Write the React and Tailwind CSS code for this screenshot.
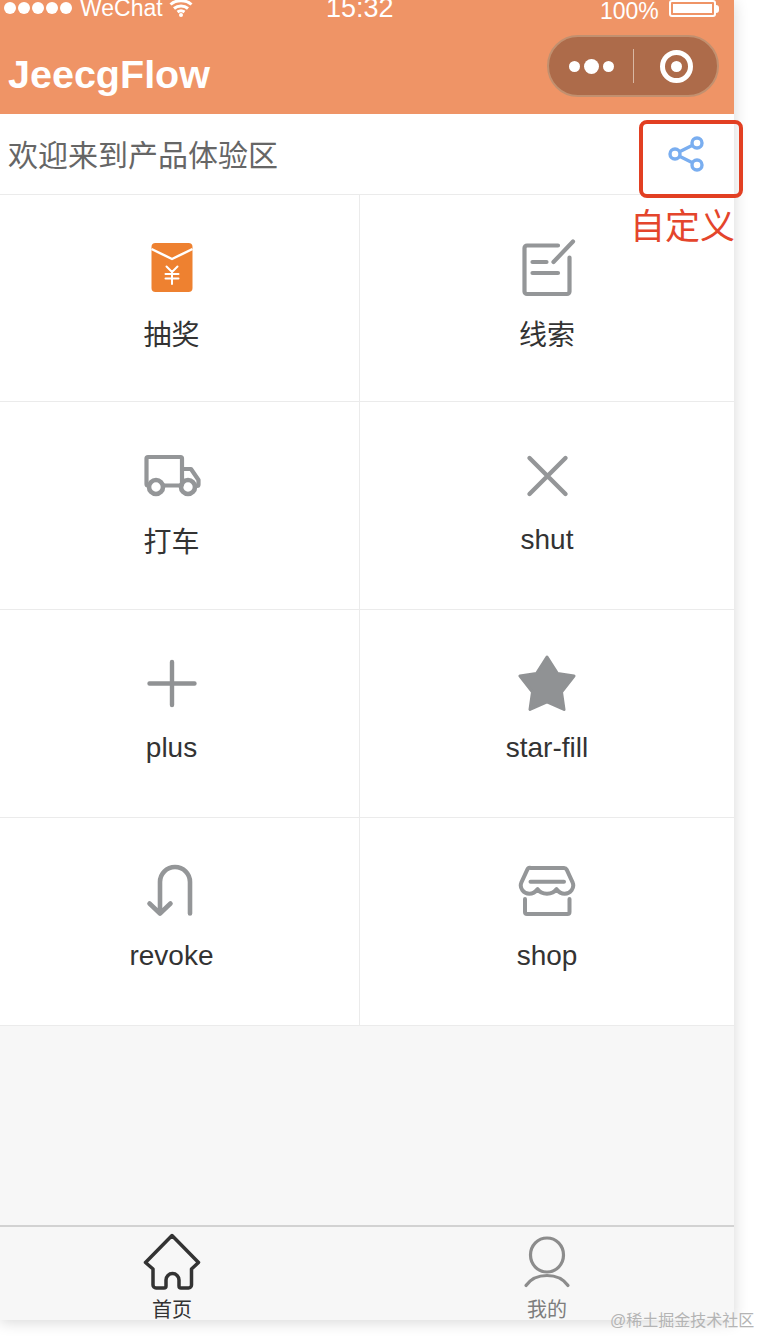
import React from "react";

const FONT = "[font-family:'Liberation_Sans','Noto_Sans_CJK_SC',sans-serif]";

const Svg = ({ children, size = 58, className = "" }) => (
  <svg
    width={size}
    height={size}
    viewBox={`0 0 ${size} ${size}`}
    fill="none"
    strokeLinecap="round"
    strokeLinejoin="round"
    className={className}
  >
    {children}
  </svg>
);

const RedPacket = () => (
  <Svg>
    <rect x="8.500" y="4" width="41" height="49" rx="4" fill="#ee8130" />
    <g stroke="#fff" strokeWidth="2.500">
      <path d="M8.500 10L29 20L49.500 10" strokeLinecap="butt" />
      <path d="M23.500 27.500L29 33L34.500 27.500M22.500 35H35.500M22.500 39.500H35.500M29 33V45" strokeWidth="2" />
    </g>
  </Svg>
);

const Note = () => (
  <Svg>
    <g stroke="#949698" strokeWidth="4.200">
      <path d="M40 6.500H9a2.500 2.500 0 0 0-2.500 2.500V52.500a2.500 2.500 0 0 0 2.500 2.500H49a2.500 2.500 0 0 0 2.500-2.500V18.500" />
      <path d="M35.500 23L55 2.500M14.500 23H28.500M14.500 34H40" />
    </g>
  </Svg>
);

const Truck = () => (
  <Svg>
    <g stroke="#949698" strokeWidth="4.200">
      <path d="M5 39.500a1.500 1.500 0 0 1-1.500-1.500V12.500A1.500 1.500 0 0 1 5 11h32.500A1.500 1.500 0 0 1 39 12.500V39" />
      <path d="M21 39.500H37" />
      <path d="M39 23h9l7.500 11v4.500A1.500 1.500 0 0 1 54 40h-1.500" />
      <circle cx="13" cy="41" r="7" strokeWidth="4.600" />
      <circle cx="45" cy="41" r="7" strokeWidth="4.600" />
    </g>
  </Svg>
);

const Shut = () => (
  <Svg>
    <path d="M11.500 12L47.500 48M47.500 12L11.500 48" stroke="#949698" strokeWidth="4.400" />
  </Svg>
);

const Plus = () => (
  <Svg>
    <path d="M6.500 29.500H51.500M29 8V51" stroke="#909294" strokeWidth="4.400" />
  </Svg>
);

const Star = () => (
  <Svg>
    <path
      d="M29 3L39.500 19.500L56 22L43.500 38L46 55.500L29 48L12 55.500L14.500 38L2 22L18.500 19.500Z"
      fill="#909294"
      stroke="#909294"
      strokeWidth="3"
    />
  </Svg>
);

const Revoke = () => (
  <Svg>
    <path
      d="M47 51.500V20A15 15 0 0 0 17 20V51M6.500 41.500L17 51.500L27.500 41.500"
      stroke="#949698"
      strokeWidth="4.600"
    />
  </Svg>
);

const Shop = () => (
  <Svg>
    <g stroke="#949698" strokeWidth="4">
      <path d="M13 6h33a3 3 0 0 1 2.700 1.700l6 13c2 5-2 11-8 11-3.500 0-6-1.500-8.200-4.500-2 3-5 4.500-9.500 4.500s-7.500-1.500-9.500-4.500c-2.200 3-4.700 4.500-8.200 4.500-6 0-10-6-8-11l6-13A3 3 0 0 1 13 6z" />
      <path d="M12.500 19.700H46" />
      <path d="M7 37V50a2 2 0 0 0 2 2H49.500a2 2 0 0 0 2-2V37" />
    </g>
  </Svg>
);

const Home = () => (
  <Svg>
    <path
      d="M29 2.500L55.500 29.500L48.500 36V52a3 3 0 0 1-3 3H38a2 2 0 0 1-2-2V47a6.500 6.500 0 0 0-13 0v6a2 2 0 0 1-2 2H13a3 3 0 0 1-3-3V36L2.500 29.500Z"
      stroke="#333"
      strokeWidth="3.500"
    />
  </Svg>
);

const Person = () => (
  <Svg>
    <ellipse cx="29" cy="22" rx="16.500" ry="17" stroke="#8c8c8c" strokeWidth="3.200" />
    <path d="M8 52.500C13 45.500 20 42.500 29 42.500S45 45.500 50 52.500" stroke="#8c8c8c" strokeWidth="3.200" />
  </Svg>
);

const cells = [
  { label: "抽奖", icon: RedPacket, cjk: true },
  { label: "线索", icon: Note, cjk: true },
  { label: "打车", icon: Truck, cjk: true },
  { label: "shut", icon: Shut },
  { label: "plus", icon: Plus },
  { label: "star-fill", icon: Star },
  { label: "revoke", icon: Revoke },
  { label: "shop", icon: Shop },
];

const App = () => {
  return (
    <div className={`relative w-[758px] h-[1336px] overflow-hidden bg-white ${FONT}`}>
      <div className="relative w-[734px] h-[1320px] flex flex-col bg-white shadow-[0_2px_14px_rgba(0,0,0,0.16)]">
        {/* status bar + title */}
        <header className="h-[114px] bg-[#ef9466] text-white">
          <div className="h-[35px] flex items-start overflow-hidden">
            <div className="w-[326px] flex items-center pl-1 h-[15px]">
              <div className="flex gap-[2px]">
                <span className="w-3 h-3 rounded-full bg-white" />
                <span className="w-3 h-3 rounded-full bg-white" />
                <span className="w-3 h-3 rounded-full bg-white" />
                <span className="w-3 h-3 rounded-full bg-white" />
                <span className="w-3 h-3 rounded-full bg-white" />
              </div>
              <span className="ml-2 text-[23px] leading-[16px]">WeChat</span>
              <svg width="24" height="18" viewBox="0 0 24 18" fill="none" stroke="#fff" strokeWidth="3" className="ml-[6px]">
                <path d="M1.500 5.500C7 0.500 17 0.500 22.500 5.500M5 9.500C9 6 15 6 19 9.500M8.500 13C10.500 11.500 13.500 11.500 15.500 13" />
                <circle cx="12" cy="16" r="2" fill="#fff" stroke="none" />
              </svg>
            </div>
            <span className="w-[274px] text-[27px] leading-[16px]">15:32</span>
            <span className="text-[23px] leading-[20px] pt-[1px]">100%</span>
            <div className="ml-[10px] flex items-center h-[17px]">
              <div className="w-[47px] h-[17px] border-2 border-white rounded-[3px] p-[2px]">
                <div className="w-full h-full bg-white" />
              </div>
              <div className="w-[3px] h-[8px] bg-white rounded-r-sm" />
            </div>
          </div>
          <div className="flex justify-between items-start pl-2 pr-[15px]">
            <h1 className="pt-[15px] text-[39.5px] leading-[48px] font-bold">JeecgFlow</h1>
            <div className="w-[172px] h-[62px] flex items-center rounded-full bg-[#ad6b4a] border-2 border-[#c2906f]">
              <div className="flex items-center gap-[4px] ml-[20px]">
                <span className="w-[11px] h-[11px] rounded-full bg-white" />
                <span className="w-[15px] h-[15px] rounded-full bg-white" />
                <span className="w-[11px] h-[11px] rounded-full bg-white" />
              </div>
              <div className="w-px h-[34px] bg-[#d9b8a3] ml-[19px]" />
              <div className="ml-[26px] w-[33px] h-[33px] rounded-full border-[5px] border-white flex items-center justify-center">
                <span className="w-[11px] h-[11px] rounded-full bg-white" />
              </div>
            </div>
          </div>
        </header>

        {/* notice */}
        <div className="relative h-[81px] flex items-center justify-between pl-2 pr-[28px] border-b border-[#ebebeb]">
          <span className="pt-1 text-[30px] leading-[40px] text-[#666]">欢迎来到产品体验区</span>
          <svg width="40" height="40" viewBox="0 0 40 40" fill="none" stroke="#7aaef0" strokeWidth="3.400">
            <path d="M14 17.500L26 11.500M14 22.500L26 28.500" />
            <circle cx="9" cy="20" r="5" />
            <circle cx="31" cy="9" r="5" />
            <circle cx="31" cy="31" r="5" />
          </svg>
          <div className="absolute left-[639px] top-[6px] w-[104px] h-[78px] rounded-lg border-4 border-[#e23f22]" />
          <span className="absolute left-[630px] top-[92px] text-[35px] leading-[42px] whitespace-nowrap text-[#e4452c]">
            自定义
          </span>
        </div>

        {/* grid */}
        <div className="grid grid-cols-[360px_374px] grid-rows-[207px_208px_208px_208px]">
          {cells.map((cell, i) => {
            const Icon = cell.icon;
            return (
              <div
                key={cell.label}
                className={`flex flex-col items-center pt-[44px] border-b border-[#ebebeb] ${i % 2 === 0 ? "border-r pr-[16px]" : ""}`}
              >
                <Icon />
                <span className={`${cell.cjk ? "mt-[18px]" : "mt-[15px]"} text-[28px] leading-[42px] text-[#333]`}>
                  {cell.label}
                </span>
              </div>
            );
          })}
        </div>

        <div className="flex-1 bg-[#f7f7f7]" />

        {/* tab bar */}
        <nav className="h-[95px] grid grid-cols-[360px_374px] bg-[#f7f7f7] border-t-2 border-[#d2d2d2]">
          <div className="flex flex-col items-center pt-[6px] pr-[16px]">
            <Home />
            <span className="mt-[9px] text-[20px] leading-[20px] text-[#333]">首页</span>
          </div>
          <div className="flex flex-col items-center pt-[6px]">
            <Person />
            <span className="mt-[9px] text-[20px] leading-[20px] text-[#7d7d7d]">我的</span>
          </div>
        </nav>
      </div>

      <span className="absolute left-[610px] top-[1312px] text-[16px] leading-[18px] whitespace-nowrap text-[#b4b4b4]">
        @稀土掘金技术社区
      </span>
    </div>
  );
};

export default App;
